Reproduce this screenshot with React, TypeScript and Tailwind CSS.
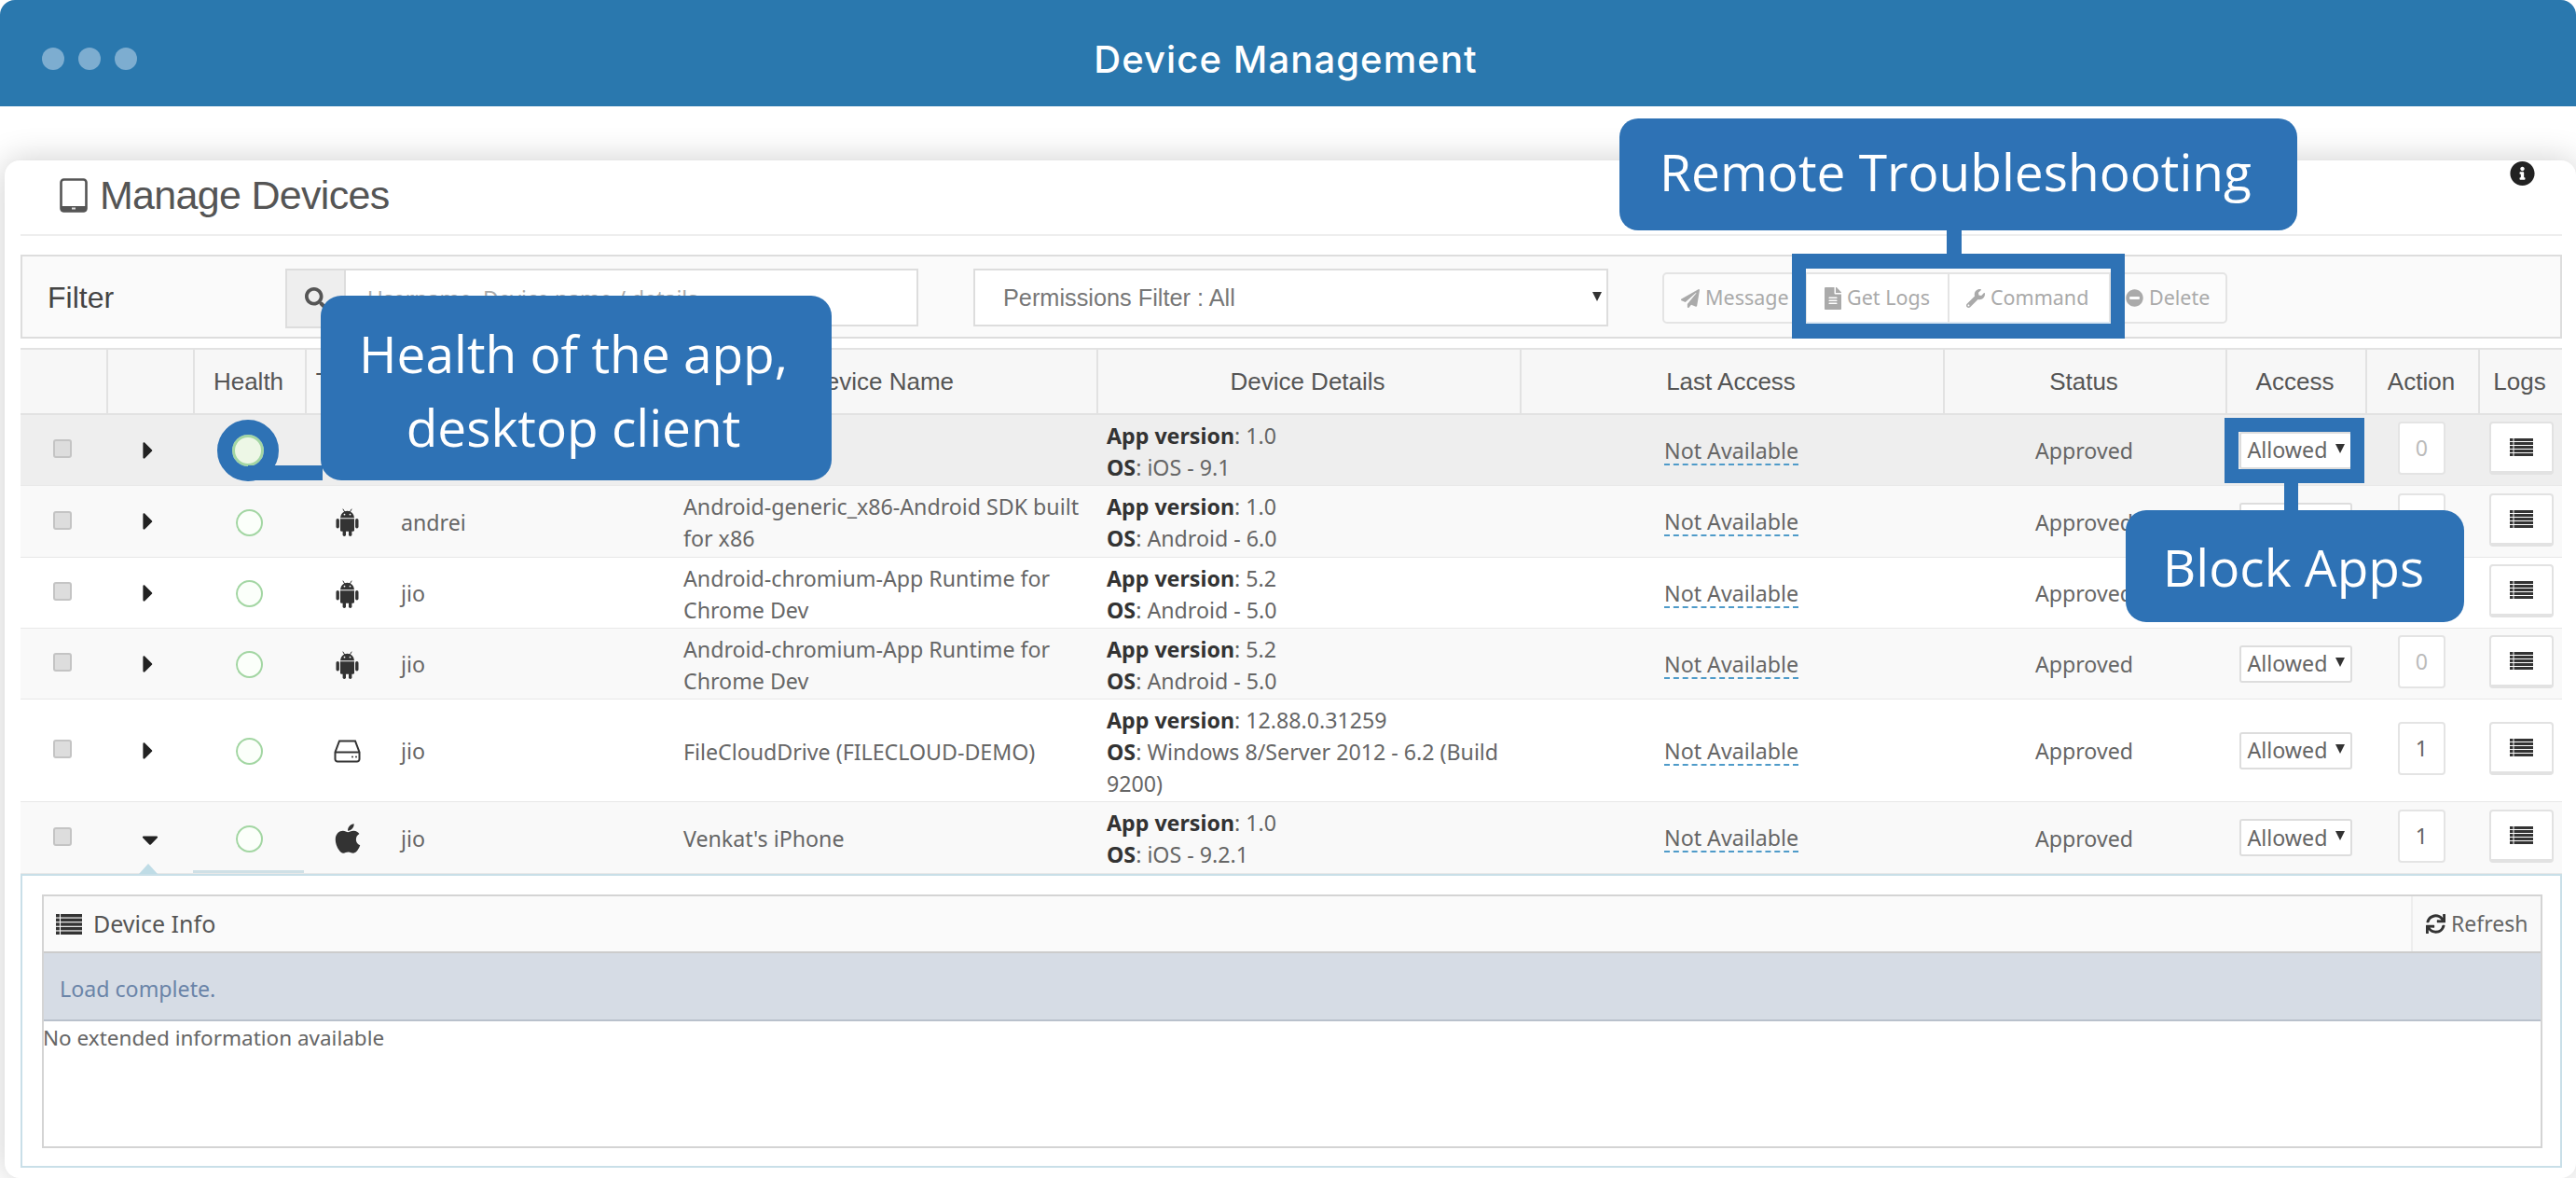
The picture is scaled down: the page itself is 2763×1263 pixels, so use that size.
import React from "react";
import { FaApple, FaSearch, FaPaperPlane, FaFileAlt, FaWrench, FaMinusCircle, FaInfoCircle, FaSync, FaCaretRight, FaCaretDown } from "react-icons/fa";

const grid = "grid grid-cols-[92px_93px_120px_81px_307px_461px_454px_454px_303px_150px_121px_90px]";
const body = "font-['Noto_Sans','Open_Sans',sans-serif]";

function ListIcon({ className }: { className: string }) {
  return (
    <svg viewBox="0 0 25 19" className={className} fill="#333" preserveAspectRatio="none">
      {[0, 4, 8, 12, 16].map((y) => (
        <g key={y}>
          <rect x="0" y={y} width="3.5" height="3" />
          <rect x="4.5" y={y} width="20.5" height="3" />
        </g>
      ))}
    </svg>
  );
}

function TabletIcon() {
  return (
    <svg viewBox="0 0 30 37" className="w-[30px] h-[37px]" fill="none">
      <rect x="1.5" y="1.5" width="27" height="34" rx="3" stroke="#555" strokeWidth="2.6" />
      <rect x="1.5" y="30" width="27" height="5.5" fill="#555" />
      <rect x="13" y="31.5" width="4" height="2" fill="#ddd" />
    </svg>
  );
}

function AndroidIcon() {
  return (
    <svg viewBox="0 0 27 30" className="w-[27px] h-[30px]" fill="#333">
      <path d="M6 10.2a7.5 7.5 0 0 1 15 0z" />
      <path d="M9 1l2 3.5M18 1l-2 3.5" stroke="#333" strokeWidth="1" strokeLinecap="round" />
      <circle cx="10.5" cy="6.6" r="0.9" fill="#fff" />
      <circle cx="16.5" cy="6.6" r="0.9" fill="#fff" />
      <path d="M6 11.2h15v12a1.6 1.6 0 0 1-1.6 1.6H7.6A1.6 1.6 0 0 1 6 23.2z" />
      <rect x="1.5" y="11" width="3.4" height="10.5" rx="1.7" />
      <rect x="22.1" y="11" width="3.4" height="10.5" rx="1.7" />
      <rect x="8.6" y="23" width="3.4" height="7" rx="1.7" />
      <rect x="15" y="23" width="3.4" height="7" rx="1.7" />
    </svg>
  );
}

function DriveIcon() {
  return (
    <svg viewBox="0 0 29 25" className="w-[29px] h-[25px]" fill="none" stroke="#333" strokeWidth="2">
      <path d="M6 1.5h17l4.5 12v7.5a2.5 2.5 0 0 1-2.5 2.5H4A2.5 2.5 0 0 1 1.5 21v-7.5z" />
      <path d="M1.5 13.5h26" />
      <circle cx="20" cy="18.5" r="1" fill="#333" stroke="none" />
      <circle cx="24" cy="18.5" r="1" fill="#333" stroke="none" />
    </svg>
  );
}

function Arrow() {
  return <span className="w-0 h-0 border-x-[5px] border-x-transparent border-t-[10px] border-t-[#333] mb-[4px]" />;
}

type Row = {
  h: string;
  bg: string;
  icon: React.ReactNode;
  user: string;
  name: React.ReactNode;
  details: React.ReactNode;
  action: string;
  down?: boolean;
};

const android = <AndroidIcon />;
const apple = <FaApple className="text-[#333] w-[36px] h-[36px]" />;

const App2 = (v: string, os: React.ReactNode) => (
  <>
    <b className="font-bold text-[#333]">App version</b>: {v}
    <br />
    <b className="font-bold text-[#333]">OS</b>: {os}
  </>
);

const rows: Row[] = [
  { h: "h-[76px]", bg: "bg-[#eeeeee]", icon: apple, user: "", name: "", details: App2("1.0", "iOS - 9.1"), action: "0" },
  { h: "h-[77px]", bg: "bg-[#f9f9f9]", icon: android, user: "andrei", name: <>Android-generic_x86-Android SDK built<br />for x86</>, details: App2("1.0", "Android - 6.0"), action: "0" },
  { h: "h-[76px]", bg: "bg-white", icon: android, user: "jio", name: <>Android-chromium-App Runtime for<br />Chrome Dev</>, details: App2("5.2", "Android - 5.0"), action: "0" },
  { h: "h-[76px]", bg: "bg-[#f9f9f9]", icon: android, user: "jio", name: <>Android-chromium-App Runtime for<br />Chrome Dev</>, details: App2("5.2", "Android - 5.0"), action: "0" },
  { h: "h-[110px]", bg: "bg-white", icon: <DriveIcon />, user: "jio", name: "FileCloudDrive (FILECLOUD-DEMO)", details: App2("12.88.0.31259", <>Windows 8/Server 2012 - 6.2 (Build<br />9200)</>), action: "1" },
  { h: "h-[77px]", bg: "bg-[#f9f9f9]", icon: apple, user: "jio", name: "Venkat's iPhone", details: App2("1.0", "iOS - 9.2.1"), action: "1", down: true },
];

const headers = ["", "", "Health", "Type", "Username", "Device Name", "Device Details", "Last Access", "Status", "Access", "Action", "Logs"];

export default function App() {
  return (
    <div className="relative w-[2763px] h-[1263px] overflow-hidden bg-white flex flex-col font-['Liberation_Sans',sans-serif]">
      <header className="relative z-10 h-[114px] shrink-0 bg-[#2a78ae] rounded-t-[16px] flex items-center justify-center pt-[13px]">
        <div className="absolute left-[45px] top-[51px] flex gap-[15px]">
          <span className="w-[24px] h-[24px] rounded-full bg-[#7dadd0]" />
          <span className="w-[24px] h-[24px] rounded-full bg-[#7dadd0]" />
          <span className="w-[24px] h-[24px] rounded-full bg-[#7dadd0]" />
        </div>
        <h1 className="text-white text-[40px] tracking-[1.1px] font-['Inter',sans-serif] font-medium -ml-[5px]">Device Management</h1>
      </header>

      <div className="flex-1 pt-[58px] pl-[5px]">
        <main className="h-full bg-white rounded-[16px] pl-[17px] pr-[15px] shadow-[0_0_36px_rgba(0,0,0,0.2)]">
          <div className="h-[81px] border-b-2 border-[#eeeeee] flex items-start justify-between">
            <div className="flex items-center gap-[13px] pl-[42px] pt-[13px] text-[#555]">
              <TabletIcon />
              <span className="text-[43px] leading-[48px] tracking-[-0.7px]">Manage Devices</span>
            </div>
            <FaInfoCircle className="mr-[29px] text-[#222] w-[27px] h-[28px]" />
          </div>

          <section className="mt-[20px] h-[90px] border-2 border-[#dddddd] bg-[#fafafa] flex items-start pt-[13px]">
            <div className="w-[282px] pl-[27px] h-[62px] flex items-center text-[32px] text-[#444]">Filter</div>
            <div className="w-[65px] h-[64px] bg-[#eeeeee] border-2 border-[#dddddd] flex items-center justify-center">
              <FaSearch className="text-[#555] w-[24px] h-[24px]" />
            </div>
            <div className={`w-[614px] h-[62px] bg-white border-2 border-l-0 border-[#dddddd] pl-[23px] pt-[3px] flex items-center text-[23px] text-[#aaa] ${body}`}>Username, Device name / details</div>
            <div className="ml-[59px] w-[681px] h-[62px] bg-white border-2 border-[#dddddd] pl-[30px] pr-[5px] pt-[2px] flex items-center justify-between text-[25.3px] text-[#777]">
              <span>Permissions Filter : All</span>
              <Arrow />
            </div>
            <div className={`ml-[58px] mt-[4px] h-[55px] flex text-[21.5px] text-[#aaa] ${body}`}>
              <div className="w-[155px] bg-[#fcfcfc] border-2 border-[#e4e4e4] rounded-l-[5px] flex items-center gap-[6px] pl-[18px]"><FaPaperPlane className="w-[20px] h-[20px]" />Message</div>
              <div className="w-[153px] bg-white border-2 border-l-0 border-[#e4e4e4] border-b-[#dbe8f4] flex items-center gap-[6px] pl-[19px]"><FaFileAlt className="w-[18px] h-[24px]" />Get Logs</div>
              <div className="w-[173px] bg-white border-2 border-l-0 border-[#e4e4e4] border-b-[#dbe8f4] flex items-center gap-[6px] pl-[18px]"><FaWrench className="w-[20px] h-[20px]" />Command</div>
              <div className="w-[125px] bg-[#fcfcfc] border-2 border-l-0 border-[#e4e4e4] rounded-r-[5px] flex items-center gap-[6px] pl-[16px]"><FaMinusCircle className="w-[19px] h-[19px]" />Delete</div>
            </div>
          </section>

          <section className={`mt-[10px] text-[23.2px] text-[#666] ${body}`}>
            <div className={`${grid} h-[72px] bg-[#f7f7f7] border-y-2 border-[#e2e2e2]`}>
              {headers.map((h, i) => (
                <div key={i} className="flex items-center justify-center pr-[3px] border-l-2 first:border-l-0 border-[#e2e2e2] text-[#555] text-[26px] font-['Liberation_Sans',sans-serif]">{h}</div>
              ))}
            </div>

            {rows.map((r, i) => (
              <div key={i} className={`${grid} ${r.h} ${r.bg} border-b border-[#e8e8e8]`}>
                <div className="flex items-center justify-center pb-[3px] pr-[3px]">
                  <span className="w-[20px] h-[20px] rounded-[3px] bg-[#dddddd] border-2 border-[#c4c4c4]" />
                </div>
                <div className="flex items-center justify-center pr-[3px]">
                  {r.down ? <FaCaretDown className="text-[#222] w-[28px] h-[28px] ml-[3px] mt-[3px]" /> : <FaCaretRight className="text-[#222] w-[28px] h-[30px]" />}
                </div>
                <div className="flex items-center justify-center pt-[2px]">
                  <span className="w-[29px] h-[29px] rounded-full border-[2.5px] border-[#a3d6a3] bg-[#fbfffa]" />
                </div>
                <div className="flex items-center justify-center pl-[10px] pt-[2px]">{r.icon}</div>
                <div className="flex items-center pl-[22px] pt-[2px]">{r.user}</div>
                <div className="flex items-center pl-[18px] pt-[2px] leading-[34px]">{r.name}</div>
                <div className="flex items-center pl-[11px] pt-[2px] leading-[34px]">
                  <div>{r.details}</div>
                </div>
                <div className="flex items-center justify-center pt-[2px]">
                  <span className="border-b-2 border-dashed border-[#4f9bc9] leading-[28px]">Not Available</span>
                </div>
                <div className="flex items-center justify-center pt-[2px]">Approved</div>
                <div className="flex items-center justify-center">
                  <div className="w-[121px] h-[40px] bg-white border-2 border-[#dddddd] rounded-[3px] flex items-center justify-between pl-[7px] pr-[6px] text-[#666]">
                    <span>Allowed</span>
                    <Arrow />
                  </div>
                </div>
                <div className="flex items-center justify-center pb-[4px]">
                  <div className={`w-[51px] h-[57px] bg-white border-2 border-[#e4e4e4] rounded-[4px] flex items-center justify-center ${r.action === "0" ? "text-[#bbb]" : "text-[#666]"}`}>{r.action}</div>
                </div>
                <div className="flex items-center justify-center pb-[4px] pl-[3px]">
                  <div className="w-[69px] h-[57px] bg-white border-2 border-b-4 border-[#e2e2e2] rounded-[4px] flex items-center justify-center">
                    <ListIcon className="w-[25px] h-[19px]" />
                  </div>
                </div>
              </div>
            ))}

            <div className="h-[315px] border-2 border-[#c9dfe8] pl-[21px] pr-[19px] pt-[20px] bg-white">
              <div className="h-[272px] border-2 border-[#d4d4d4] flex flex-col">
                <div className="h-[61px] shrink-0 bg-[#fafafa] border-b-2 border-[#cccccc] flex items-center justify-between">
                  <div className="flex items-center gap-[12px] pl-[13px] text-[25px] text-[#555]">
                    <ListIcon className="w-[28px] h-[22px]" />
                    <span>Device Info</span>
                  </div>
                  <div className="h-full w-[139px] border-l-2 border-[#eeeeee] bg-[#f9f9f9] flex items-center gap-[6px] pl-[14px] text-[23px] text-[#666]">
                    <FaSync className="text-[#333] w-[21px] h-[21px]" />
                    Refresh
                  </div>
                </div>
                <div className="h-[73px] shrink-0 bg-[#d6dce5] border-b-2 border-[#b9c1cc] flex items-center pl-[17px] pt-[5px] text-[#6a84a8]">Load complete.</div>
                <div className="pt-[1px] -ml-[1px] leading-[34px] text-[22.5px]">No extended information available</div>
              </div>
            </div>
          </section>
        </main>
      </div>

      {/* expand pointer */}
      <span className="absolute left-[149px] top-[926px] w-0 h-0 border-x-[10px] border-x-transparent border-b-[11px] border-b-[#bfdce6]" />
      <span className="absolute left-[207px] top-[933px] w-[119px] h-[3px] bg-[#cfe0e6]" />

      {/* Remote Troubleshooting callout */}
      <div className="absolute left-[1737px] top-[127px] w-[727px] h-[120px] rounded-[20px] bg-[#2e72b5] flex items-center justify-center pb-[5px] pr-[6px] text-white text-[55px] font-['Open_Sans',sans-serif]">Remote Troubleshooting</div>
      <span className="absolute left-[2088px] top-[247px] w-[16px] h-[26px] bg-[#2e72b5]" />
      <span className="absolute left-[1922px] top-[272px] w-[357px] h-[91px] border-x-[15px] border-t-[16px] border-b-[16px] border-[#2e72b5]" />

      {/* Health callout */}
      <div className="absolute left-[233px] top-[450px] w-[66px] h-[66px] rounded-full border-[16px] border-[#2e72b5] bg-[#edf7e6] shadow-[inset_0_0_0_3px_#a3d6a3]" />
      <span className="absolute left-[266px] top-[499px] w-[80px] h-[16px] bg-[#2e72b5]" />
      <div className="absolute left-[344px] top-[317px] w-[548px] h-[198px] rounded-[22px] bg-[#2e72b5] flex items-center justify-center pt-[3px] pr-[6px] text-center text-white text-[55px] leading-[79px] font-['Open_Sans',sans-serif]">
        <div>Health of the app,<br />desktop client</div>
      </div>

      {/* Block Apps callout */}
      <span className="absolute left-[2386px] top-[448px] w-[150px] h-[70px] border-[15px] border-[#2e72b5]" />
      <span className="absolute left-[2450px] top-[518px] w-[15px] h-[30px] bg-[#2e72b5]" />
      <div className="absolute left-[2280px] top-[547px] w-[363px] h-[120px] rounded-[22px] bg-[#2e72b5] flex items-center justify-center pt-[2px] pr-[3px] text-white text-[55px] font-['Open_Sans',sans-serif]">Block Apps</div>
    </div>
  );
}
